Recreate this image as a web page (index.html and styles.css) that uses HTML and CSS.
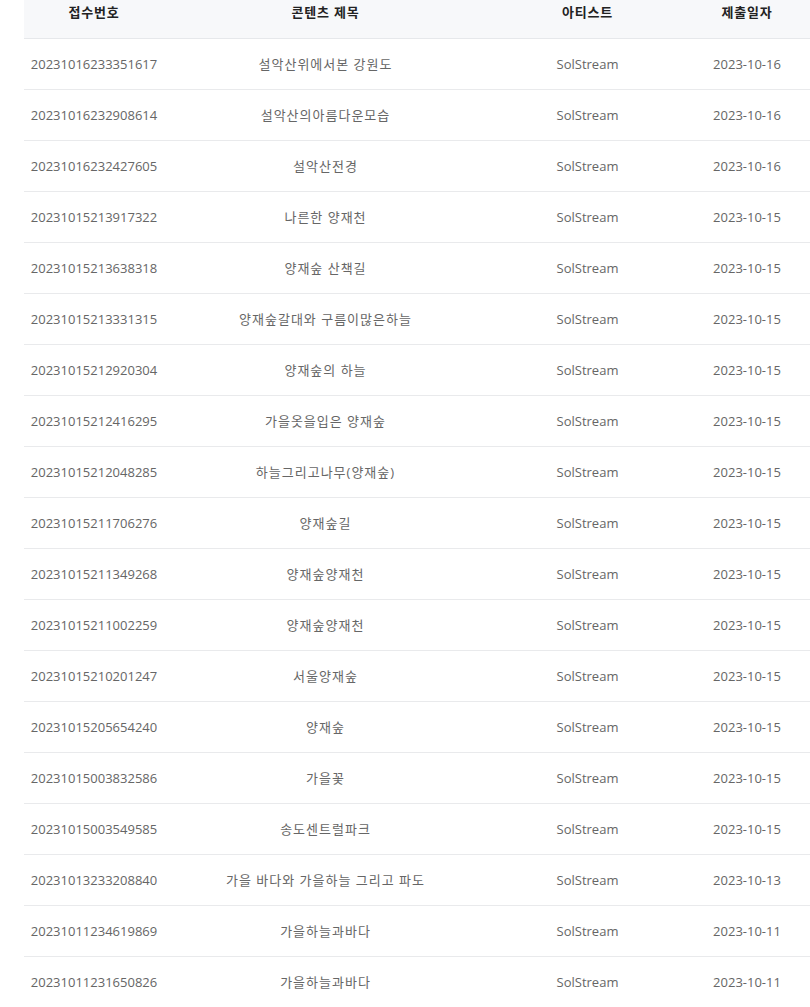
FILE: index.html
```html
<!DOCTYPE html>
<html lang="ko">
<head>
<meta charset="utf-8">
<link rel="stylesheet" href="styles.css">
</head>
<body>
<div class="wrap">
<table class="list">
<colgroup>
<col class="c1"><col class="c2"><col class="c3"><col class="c4">
</colgroup>
<thead>
<tr><th>접수번호</th><th>콘텐츠 제목</th><th>아티스트</th><th class="last">제출일자</th></tr>
</thead>
<tbody>
<tr><td>20231016233351617</td><td class="ko">설악산위에서본 강원도</td><td>SolStream</td><td class="last">2023-10-16</td></tr>
<tr><td>20231016232908614</td><td class="ko">설악산의아름다운모습</td><td>SolStream</td><td class="last">2023-10-16</td></tr>
<tr><td>20231016232427605</td><td class="ko">설악산전경</td><td>SolStream</td><td class="last">2023-10-16</td></tr>
<tr><td>20231015213917322</td><td class="ko">나른한 양재천</td><td>SolStream</td><td class="last">2023-10-15</td></tr>
<tr><td>20231015213638318</td><td class="ko">양재숲 산책길</td><td>SolStream</td><td class="last">2023-10-15</td></tr>
<tr><td>20231015213331315</td><td class="ko">양재숲갈대와 구름이많은하늘</td><td>SolStream</td><td class="last">2023-10-15</td></tr>
<tr><td>20231015212920304</td><td class="ko">양재숲의 하늘</td><td>SolStream</td><td class="last">2023-10-15</td></tr>
<tr><td>20231015212416295</td><td class="ko">가을옷을입은 양재숲</td><td>SolStream</td><td class="last">2023-10-15</td></tr>
<tr><td>20231015212048285</td><td class="ko">하늘그리고나무(양재숲)</td><td>SolStream</td><td class="last">2023-10-15</td></tr>
<tr><td>20231015211706276</td><td class="ko">양재숲길</td><td>SolStream</td><td class="last">2023-10-15</td></tr>
<tr><td>20231015211349268</td><td class="ko">양재숲양재천</td><td>SolStream</td><td class="last">2023-10-15</td></tr>
<tr><td>20231015211002259</td><td class="ko">양재숲양재천</td><td>SolStream</td><td class="last">2023-10-15</td></tr>
<tr><td>20231015210201247</td><td class="ko">서울양재숲</td><td>SolStream</td><td class="last">2023-10-15</td></tr>
<tr><td>20231015205654240</td><td class="ko">양재숲</td><td>SolStream</td><td class="last">2023-10-15</td></tr>
<tr><td>20231015003832586</td><td class="ko">가을꽃</td><td>SolStream</td><td class="last">2023-10-15</td></tr>
<tr><td>20231015003549585</td><td class="ko">송도센트럴파크</td><td>SolStream</td><td class="last">2023-10-15</td></tr>
<tr><td>20231013233208840</td><td class="ko">가을 바다와 가을하늘 그리고 파도</td><td>SolStream</td><td class="last">2023-10-13</td></tr>
<tr><td>20231011234619869</td><td class="ko">가을하늘과바다</td><td>SolStream</td><td class="last">2023-10-11</td></tr>
<tr><td>20231011231650826</td><td class="ko">가을하늘과바다</td><td>SolStream</td><td class="last">2023-10-11</td></tr>
</tbody>
</table>
</div>
</body>
</html>
```
FILE: styles.css
```css
html, body {
  margin: 0;
  padding: 0;
  background: #fff;
  overflow: hidden;
}
.wrap {
  padding-left: 24px;
}
.list {
  border-collapse: collapse;
  table-layout: fixed;
  width: 786px;
  font-family: "Open Sans", "Noto Sans CJK KR", sans-serif;
  font-size: 13px;
}
.c1 { width: 140px; }
.c2 { width: 323px; }
.c3 { width: 201px; }
.c4 { width: 122px; }
.list th, .list td {
  text-align: center;
  padding: 0;
  white-space: nowrap;
}
.list th.last, .list td.last {
  padding-right: 4px;
}
.list thead th {
  height: 38px;
  background: #f7f8fa;
  color: #222;
  font-weight: 700;
  font-size: 13px;
  letter-spacing: 0.8px;
  border-bottom: 1px solid #e6e8eb;
  vertical-align: middle;
  padding-bottom: 14px;
  box-sizing: border-box;
}
.list tbody td {
  height: 50px;
  color: #666;
  border-bottom: 1px solid #e9eaec;
  vertical-align: middle;
}
.list tbody td.ko {
  letter-spacing: 1px;
}
```
